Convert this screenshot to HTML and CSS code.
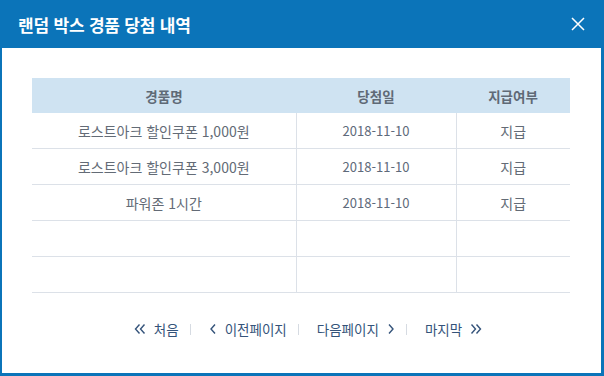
FILE: index.html
```html
<!DOCTYPE html>
<html lang="ko">

<head>
    <meta charset="UTF-8">
    <title>랜덤 박스 경품 당첨 내역</title>
    <link rel="stylesheet" href="styles.css">
</head>

<body>
    <div class="popup">
        <div class="popup-head">
            <h1>랜덤 박스 경품 당첨 내역</h1>
            <button type="button" class="close" aria-label="닫기">
                <svg width="14" height="14" viewBox="0 0 14 14"><path d="M1 1L13 13M13 1L1 13" stroke="#fff" stroke-width="1.5" fill="none"/></svg>
            </button>
        </div>
        <div class="popup-body">
            <table class="prize-table">
                <colgroup>
                    <col class="c-name">
                    <col class="c-date">
                    <col class="c-state">
                </colgroup>
                <thead>
                    <tr>
                        <th>경품명</th>
                        <th>당첨일</th>
                        <th>지급여부</th>
                    </tr>
                </thead>
                <tbody>
                    <tr>
                        <td>로스트아크 할인쿠폰 1,000원</td>
                        <td class="date">2018-11-10</td>
                        <td>지급</td>
                    </tr>
                    <tr>
                        <td>로스트아크 할인쿠폰 3,000원</td>
                        <td class="date">2018-11-10</td>
                        <td>지급</td>
                    </tr>
                    <tr>
                        <td>파워존 1시간</td>
                        <td class="date">2018-11-10</td>
                        <td>지급</td>
                    </tr>
                    <tr>
                        <td></td>
                        <td></td>
                        <td></td>
                    </tr>
                    <tr>
                        <td></td>
                        <td></td>
                        <td></td>
                    </tr>
                </tbody>
            </table>

            <div class="paging">
                <a href="#" class="first">
                    <svg width="12" height="12" viewBox="0 0 12 12"><path d="M5.5 1.5L1.5 6L5.5 10.5M10.5 1.5L6.5 6L10.5 10.5" stroke="#34537a" stroke-width="1.4" fill="none"/></svg>
                    처음
                </a>
                <span class="bar"></span>
                <a href="#" class="prev">
                    <svg width="8" height="12" viewBox="0 0 8 12"><path d="M6 1.5L2 6L6 10.5" stroke="#34537a" stroke-width="1.4" fill="none"/></svg>
                    이전페이지
                </a>
                <span class="bar"></span>
                <a href="#" class="next">
                    다음페이지
                    <svg width="8" height="12" viewBox="0 0 8 12"><path d="M2 1.5L6 6L2 10.5" stroke="#34537a" stroke-width="1.4" fill="none"/></svg>
                </a>
                <span class="bar"></span>
                <a href="#" class="last">
                    마지막
                    <svg width="12" height="12" viewBox="0 0 12 12"><path d="M1.5 1.5L5.5 6L1.5 10.5M6.5 1.5L10.5 6L6.5 10.5" stroke="#34537a" stroke-width="1.4" fill="none"/></svg>
                </a>
            </div>
        </div>
    </div>
</body>

</html>
```

FILE: styles.css
```css
body {
    margin: 0;
    font-family: "Noto Sans CJK KR", "Noto Sans", sans-serif;
    background-color: #fff;
}

.popup {
    width: 604px;
    height: 376px;
    box-sizing: border-box;
    border: 2px solid #0b74b9;
    border-top: 0;
    border-right-width: 3px;
    border-bottom-width: 3px;
    background: #fff;
}

.popup-head {
    height: 48px;
    margin: 0 -3px 0 -2px;
    padding: 0 19px 0 18px;
    display: flex;
    align-items: center;
    justify-content: space-between;
    background: #0b74b9;
}

.popup-head h1 {
    margin: 0;
    font-size: 17px;
    font-weight: bold;
    color: #fff;
    letter-spacing: -0.2px;
}

.close {
    width: 14px;
    height: 14px;
    padding: 0;
    border: none;
    background: none;
    cursor: pointer;
    display: flex;
}

.popup-body {
    padding: 30px 31px 0 30px;
}

.prize-table {
    width: 100%;
    border-collapse: collapse;
    table-layout: fixed;
}

.c-name {
    width: 264px;
}

.c-date {
    width: 160px;
}

.prize-table th {
    height: 35px;
    padding: 0;
    background: #cfe3f2;
    color: #5f6a77;
    font-size: 13.5px;
    font-weight: bold;
}

.prize-table td {
    height: 35px;
    padding: 0;
    border-bottom: 1px solid #dce1e8;
    border-left: 1px solid #dce1e8;
    text-align: center;
    color: #636b76;
    font-size: 14px;
}

.prize-table td:first-child {
    border-left: none;
}

.prize-table td.date {
    color: #5e6a7a;
    font-size: 13px;
}

.paging {
    margin-top: 26px;
    display: flex;
    justify-content: center;
    align-items: center;
    padding-left: 14px;
}

.paging a {
    display: flex;
    align-items: center;
    gap: 8px;
    color: #34537a;
    font-size: 13.5px;
    text-decoration: none;
}

.bar {
    width: 1px;
    height: 11px;
    margin: 0 18px 0 11px;
    background: #d6dbe2;
}
```
